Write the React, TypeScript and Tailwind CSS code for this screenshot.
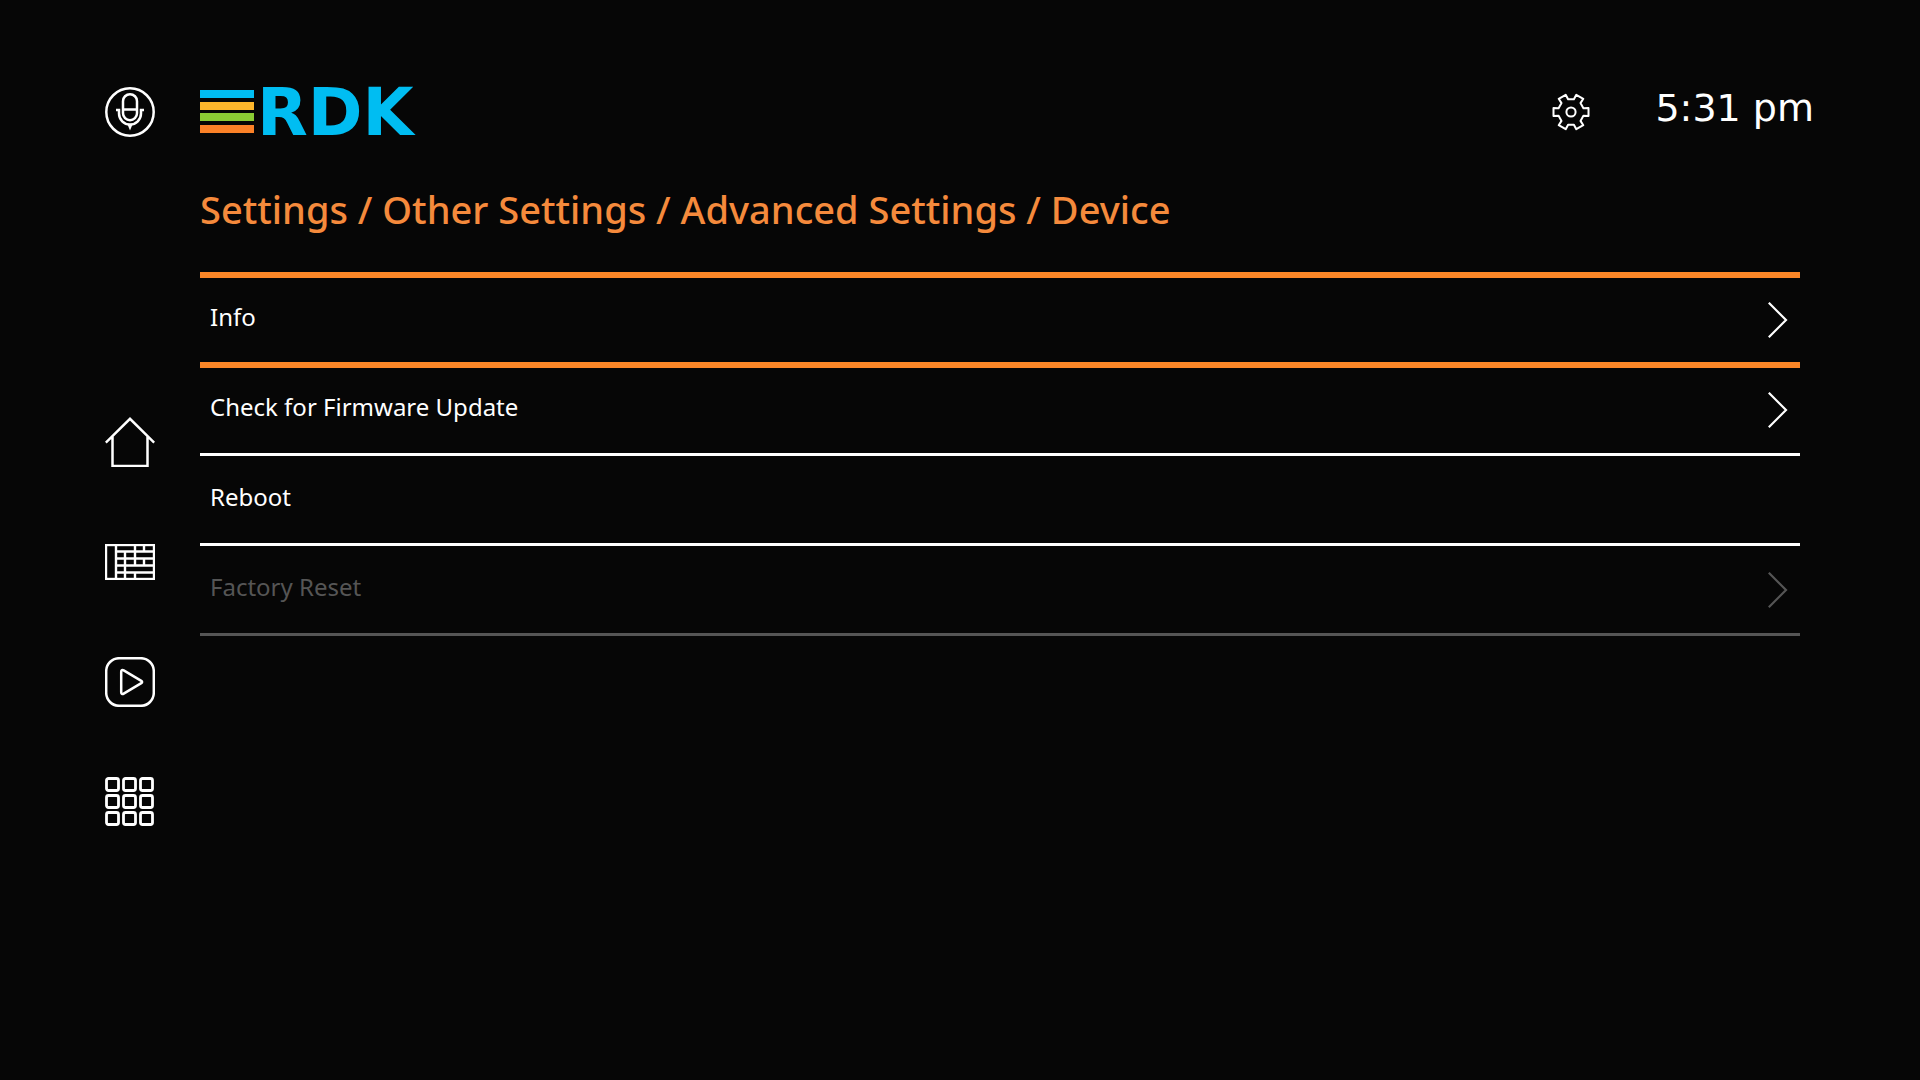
import clsx from 'clsx'
import type { ReactNode } from 'react'

type MenuItem = {
  label: string
  hasArrow: boolean
  disabled?: boolean
}

const breadcrumb = ['Settings', 'Other Settings', 'Advanced Settings', 'Device']

const menuItems: MenuItem[] = [
  { label: 'Info', hasArrow: true },
  { label: 'Check for Firmware Update', hasArrow: true },
  { label: 'Reboot', hasArrow: false },
  { label: 'Factory Reset', hasArrow: true, disabled: true },
]

const appCells = [1.5, 18.5, 35.5]

function MicIcon() {
  return (
    <svg viewBox="0 0 50 50" className="size-[50px]" fill="none" stroke="currentColor" strokeWidth="2.5">
      <circle cx="25" cy="25" r="23.7" />
      <rect x="18" y="7.2" width="14" height="26" rx="7" />
      <path d="M18 22.5h14M11 23h3v3.5a11 11 0 0 0 22 0V23h3" />
      <path d="M22.5 37.5h5L25 43.5z" fill="currentColor" stroke="none" />
    </svg>
  )
}

function HomeIcon() {
  return (
    <svg viewBox="0 0 50 50" className="size-[50px]" fill="none" stroke="currentColor" strokeWidth="2.5">
      <path d="M.8 25.6 25 1.8l24.2 23.8M7.5 19.5V49h35V19.5" />
    </svg>
  )
}

function GuideIcon() {
  return (
    <svg viewBox="0 0 50 36" className="h-9 w-[50px]" fill="none" stroke="currentColor" strokeWidth="2.4">
      <rect x="1" y="1" width="48" height="34" />
      <path d="M11 1v34M11 7.5h38M11 14.5h38M11 21.5h38M11 28.5h38" />
      <path d="M30 1v6M39 1v6M20 8v27M30 8v13M39 15v6M30 29v6" />
    </svg>
  )
}

function PlayIcon() {
  return (
    <svg viewBox="0 0 50 50" className="size-[50px]" fill="none" stroke="currentColor" strokeWidth="2.5">
      <rect x="1.2" y="1.2" width="47.6" height="47.6" rx="13" />
      <path d="M16.2 14.8v20.4c0 1.6 1.2 2.2 2.5 1.4l17.6-10.4c1.1-.7 1.1-1.7 0-2.4L18.7 13.4c-1.3-.8-2.5-.2-2.5 1.4z" />
    </svg>
  )
}

function AppsIcon() {
  return (
    <svg viewBox="0 0 50 50" className="size-[50px]" fill="none" stroke="currentColor" strokeWidth="2.8">
      {appCells.map((y) => appCells.map((x) => <rect key={`${x}-${y}`} x={x} y={y} width="12" height="12" rx="2" />))}
    </svg>
  )
}

function GearIcon() {
  return (
    <svg
      viewBox="0 0 40 40"
      className="size-10"
      fill="none"
      stroke="currentColor"
      strokeWidth="2"
      strokeLinejoin="round"
    >
      <path d="M37.5 24l-5.1-.2-2.9 5.1 2.8 4.3-7 4-2.4-4.5h-5.8l-2.4 4.5-7-4 2.8-4.3-2.9-5.1-5.1.2v-8l5.1.2 2.9-5.1-2.8-4.3 7-4 2.4 4.5h5.8l2.4-4.5 7 4-2.8 4.3 2.9 5.1 5.1-.2z" />
      <circle cx="20" cy="20" r="4.6" />
    </svg>
  )
}

function ChevronIcon() {
  return (
    <svg viewBox="0 0 20 36" className="h-9 w-5" fill="none" stroke="currentColor" strokeWidth="2.2">
      <path d="M.8.8 18 18 .8 35.2" />
    </svg>
  )
}

function Logo() {
  return (
    <svg viewBox="0 0 228 44" className="h-11 w-[228px] overflow-visible" role="img" aria-label="RDK">
      <rect width="54" height="8" fill="#00bdf2" />
      <rect y="12" width="54" height="8" fill="#fdb62b" />
      <rect y="23" width="54" height="8" fill="#8bcb34" />
      <rect y="35" width="54" height="8" fill="#fb8127" />
      <text x="57" y="45" fontSize="66" className="fill-[#00bdf2] font-['DejaVu_Sans',sans-serif] font-bold">
        RDK
      </text>
    </svg>
  )
}

function IconButton({ label, children }: { label: string; children: ReactNode }) {
  return (
    <button type="button" aria-label={label} className="flex cursor-pointer items-center justify-center">
      {children}
    </button>
  )
}

function MenuRow({ item, selected }: { item: MenuItem; selected: boolean }) {
  return (
    <li>
      <button
        type="button"
        disabled={item.disabled}
        className={clsx(
          'flex w-full items-center justify-between pr-3 pl-[10px] text-left text-2xl',
          selected ? '-mb-[2px] h-24 border-y-6 border-[#fb8627]' : 'h-[90px] border-b-3',
          !selected && (item.disabled ? 'border-[#555555] text-[#555555]' : 'border-white'),
        )}
      >
        <span className="pb-[6px]">{item.label}</span>
        {item.hasArrow && <ChevronIcon />}
      </button>
    </li>
  )
}

export default function App() {
  return (
    <div className="min-h-screen bg-[#060606] font-['Noto_Sans',sans-serif] text-white">
      <header className="flex items-center pt-[87px] pr-[106px] pl-[105px]">
        <IconButton label="Voice search">
          <MicIcon />
        </IconButton>
        <div className="ml-[45px]">
          <Logo />
        </div>
        <div className="ml-auto flex items-center gap-16">
          <IconButton label="Settings">
            <GearIcon />
          </IconButton>
          <time className="min-w-[158px] pb-2 text-right font-['DejaVu_Sans',sans-serif] text-[38px] leading-10">
            5:31 pm
          </time>
        </div>
      </header>

      <div className="flex">
        <nav aria-label="Main" className="flex w-[200px] shrink-0 flex-col items-start gap-[70px] pt-[280px] pl-[105px]">
          <IconButton label="Home">
            <HomeIcon />
          </IconButton>
          <div className="flex h-[50px] items-center">
            <IconButton label="TV guide">
              <GuideIcon />
            </IconButton>
          </div>
          <IconButton label="Videos">
            <PlayIcon />
          </IconButton>
          <IconButton label="Apps">
            <AppsIcon />
          </IconButton>
        </nav>

        <main className="flex-1 pt-12 pr-[120px]">
          <h1 className="text-[38px] leading-[48px] font-medium text-[#f58a3c]">{breadcrumb.join(' / ')}</h1>
          <ul className="mt-[39px]">
            {menuItems.map((item, index) => (
              <MenuRow key={item.label} item={item} selected={index === 0} />
            ))}
          </ul>
        </main>
      </div>
    </div>
  )
}
